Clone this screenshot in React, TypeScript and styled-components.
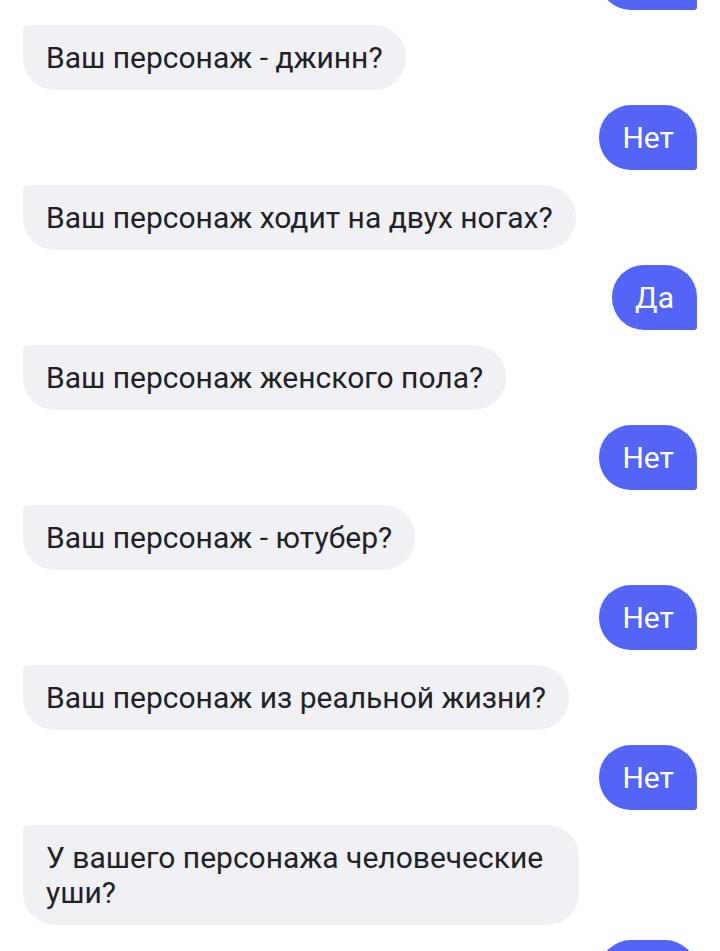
import styled, { createGlobalStyle } from "styled-components";

type Message = {
  id: number;
  from: "bot" | "user";
  text: string;
};

const messages: Message[] = [
  { id: 0, from: "user", text: "Нет" },
  { id: 1, from: "bot", text: "Ваш персонаж - джинн?" },
  { id: 2, from: "user", text: "Нет" },
  { id: 3, from: "bot", text: "Ваш персонаж ходит на двух ногах?" },
  { id: 4, from: "user", text: "Да" },
  { id: 5, from: "bot", text: "Ваш персонаж женского пола?" },
  { id: 6, from: "user", text: "Нет" },
  { id: 7, from: "bot", text: "Ваш персонаж - ютубер?" },
  { id: 8, from: "user", text: "Нет" },
  { id: 9, from: "bot", text: "Ваш персонаж из реальной жизни?" },
  { id: 10, from: "user", text: "Нет" },
  { id: 11, from: "bot", text: "У вашего персонажа человеческие уши?" },
  { id: 12, from: "user", text: "Нет" },
];

const App = () => {
  return (
    <>
      <GlobalStyle />
      <Screen>
        <Feed>
          {messages.map((item) => (
            <Row key={item.id} $mine={item.from === "user"}>
              <Bubble $mine={item.from === "user"}>{item.text}</Bubble>
            </Row>
          ))}
        </Feed>
      </Screen>
    </>
  );
};

export default App;

const GlobalStyle = createGlobalStyle`
  html, body {
    margin: 0;
    padding: 0;
    background: #ffffff;
  }
  body {
    font-family: Roboto, "Noto Sans", sans-serif;
  }
`;

const Screen = styled.div`
  width: 720px;
  height: 951px;
  overflow: hidden;
  background: #ffffff;
`;

const Feed = styled.div`
  display: flex;
  flex-direction: column;
  gap: 15px;
  padding: 0 23px;
  margin-top: -55px;
`;

const Row = styled.div<{ $mine: boolean }>`
  display: flex;
  justify-content: ${(p) => (p.$mine ? "flex-end" : "flex-start")};
`;

const Bubble = styled.div<{ $mine: boolean }>`
  box-sizing: border-box;
  max-width: 556px;
  padding: 15px 23px;
  font-size: 30px;
  line-height: 35px;
  color: ${(p) => (p.$mine ? "#ffffff" : "#222226")};
  background: ${(p) => (p.$mine ? "#5365f6" : "#f0f0f5")};
  border-radius: ${(p) => (p.$mine ? "32px 32px 3px 32px" : "4px 32px 32px 32px")};
`;
